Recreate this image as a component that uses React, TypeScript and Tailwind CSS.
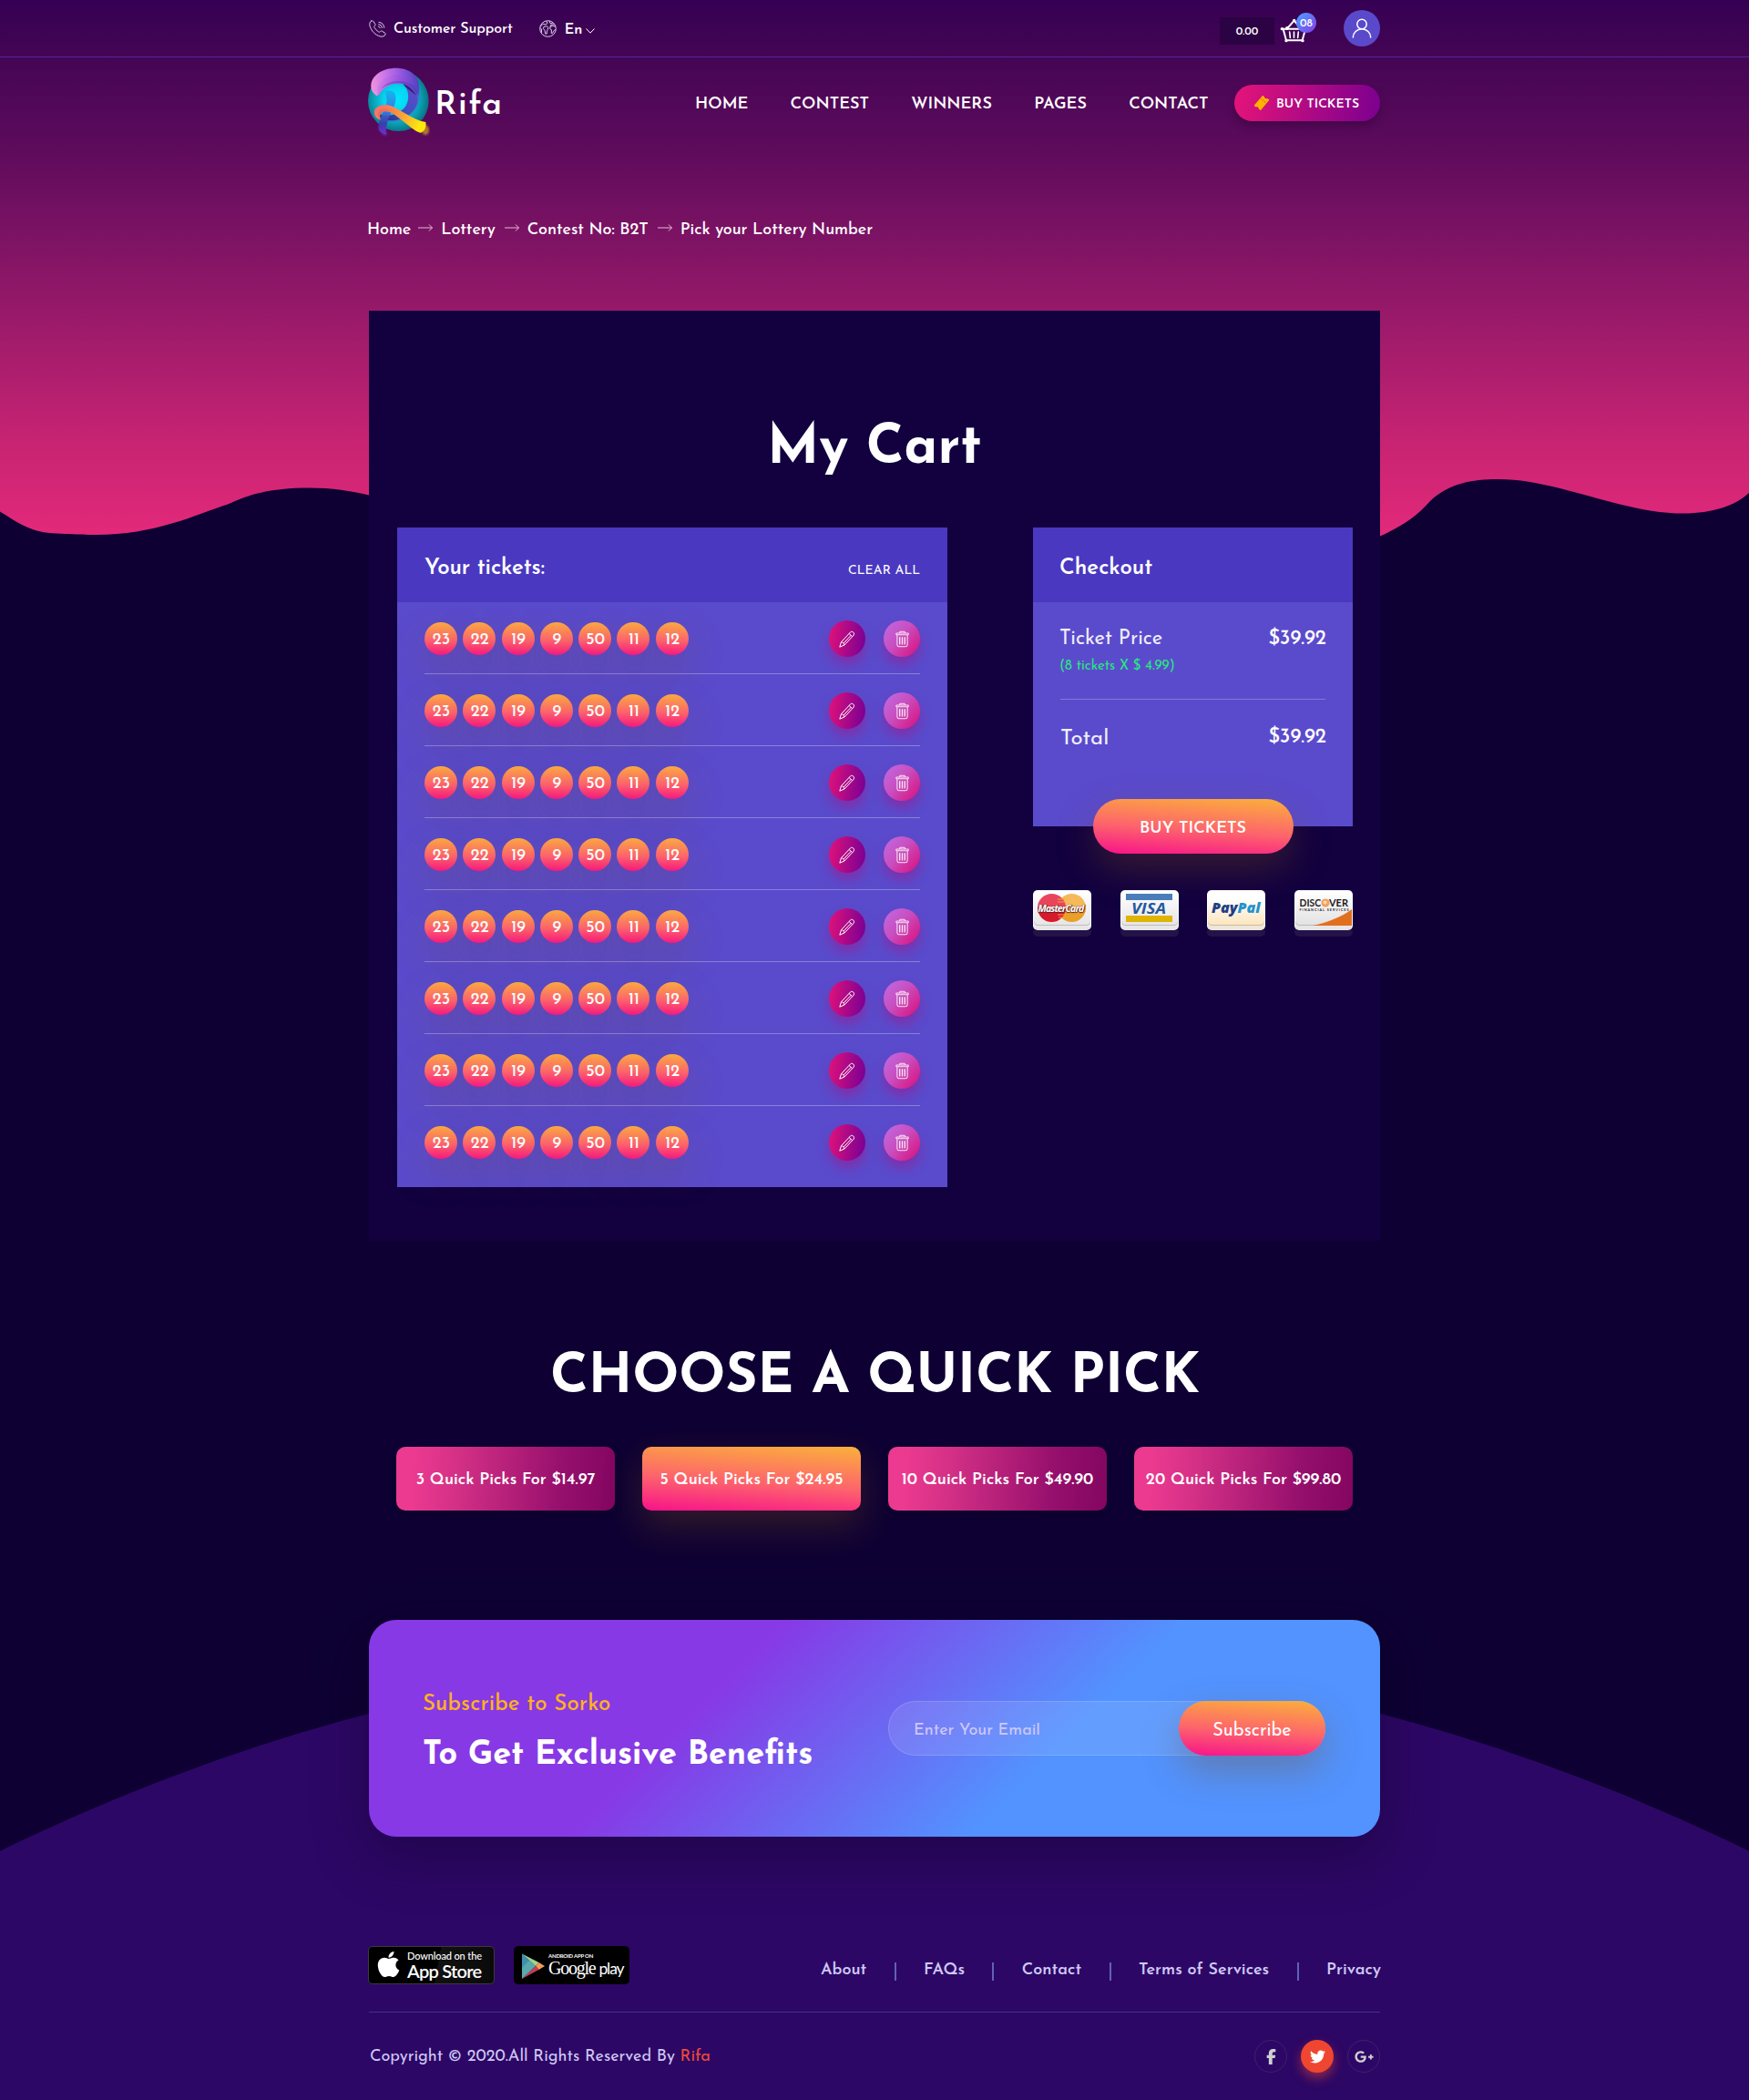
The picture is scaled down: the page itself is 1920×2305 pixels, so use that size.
import React from 'react';
import { FaApple, FaFacebookF, FaGooglePlusG, FaTwitter } from 'react-icons/fa6';

const numbers = [23, 22, 19, 9, 50, 11, 12];

function PhoneIcon() {
  return (
    <svg width="19" height="19" viewBox="0 0 19 19" fill="none" stroke="#d9cfe6" strokeWidth="1" strokeLinecap="round" strokeLinejoin="round">
      <path d="M2.6 1 C1 2 .3 4 1 6.500 C2.500 11.800 7 16.600 12.500 18 C15 18.600 17 17.800 18 16 C18.400 15 18 14.400 17.300 14 L14.500 12.200 C13.700 11.700 13 12 12.500 12.600 C11.800 13.500 11 13.300 10.200 12.700 C8.500 11.500 7 10 6 8.300 C5.500 7.400 5.600 6.700 6.500 6.200 C7.100 5.800 7.200 5.100 6.800 4.400 L5 1.600 C4.400 .7 3.500 .5 2.600 1 Z" />
      <path d="M10.500 7 C11.500 7.200 12 7.800 12.100 8.700 M10.700 4.800 C12.800 5 14.200 6.400 14.400 8.500 M11 2.400 C14.300 2.700 16.600 5 16.800 8.300" />
    </svg>
  );
}

function GlobeIcon() {
  return (
    <svg width="19" height="19" viewBox="0 0 19 19" fill="none" stroke="#d9cfe6" strokeWidth="1" strokeLinejoin="round">
      <circle cx="9.500" cy="9.500" r="8.800" />
      <path d="M1.200 7.200 L4.200 4.200 L7 5 L9.200 3.300 L7.500 1 M2.600 13.800 L2.400 10 L1 8.600" />
      <path d="M5.200 7.200 L8.400 6.800 L10 8.200 L9.200 10.600 L8.400 12.200 L8.200 15 L6.800 15.200 L5.900 11.200 L4.300 9.600 Z" />
      <path d="M11 1 L12 3.600 L14.600 3.600 M17.900 7 L14.600 6.300 L12 7.400 L11.800 9.900 L13.500 10.800 L13.200 14.400 L14.400 14.600 L16.200 11.500 L17.900 10.500 M12 7.400 L12.600 5.400 L16.500 4.600" />
    </svg>
  );
}

function BasketIcon() {
  return (
    <svg width="30" height="27.300" viewBox="224 60 90 82" fill="none" stroke="#fff" strokeWidth="6" strokeLinecap="round" strokeLinejoin="round">
      <path d="M231 95 H309 M235 96 L245 133 H298 L308 96" />
      <path d="M247 95 L271 68 L294 95" />
      <path d="M256 105 L258 124 M270.500 105 V124 M285 105 L283 124" strokeWidth="5" />
      <g fill="#fff" stroke="none">
        <circle cx="231" cy="95" r="5" />
        <circle cx="248" cy="93" r="6" />
        <circle cx="271" cy="67" r="5" />
        <circle cx="245" cy="134" r="5" />
        <circle cx="299" cy="134" r="5" />
      </g>
    </svg>
  );
}

function UserIcon() {
  return (
    <svg width="22" height="22" viewBox="0 0 22 22" fill="none" stroke="#fff" strokeWidth="1.500" strokeLinecap="round">
      <circle cx="11" cy="6.500" r="5.200" />
      <path d="M1.300 21 A9.700 9.300 0 0 1 20.700 21" />
    </svg>
  );
}

function TicketIcon() {
  return (
    <svg width="18" height="18" viewBox="0 0 18 18">
      <path d="M.6 11.800 L10.200 .8 L12 2.400 A2.300 2.300 0 0 0 15.400 4 L17.400 5.800 L7.800 17.200 L5.800 15.400 A2.200 2.200 0 0 0 2.600 13.400 Z" fill="#ffb100" />
      <path d="M8.400 4.200 L13.800 9" stroke="#c4187a" strokeWidth=".9" strokeDasharray="1.200 1.300" />
    </svg>
  );
}

function Logo() {
  return (
    <svg width="69" height="77" viewBox="17 192 207 231" className="mb-[2px] shrink-0">
      <defs>
        <radialGradient id="lgTeal" cx="0.47" cy="0.48" r="0.53">
          <stop offset="0" stopColor="#00e8ff" />
          <stop offset="0.4" stopColor="#06d3ee" />
          <stop offset="0.75" stopColor="#0a9fb2" />
          <stop offset="1" stopColor="#0b7386" />
        </radialGradient>
        <linearGradient id="lgCrest" x1="0" y1="0.6" x2="1" y2="0.5">
          <stop offset="0" stopColor="#f094dd" />
          <stop offset="0.35" stopColor="#c873ea" />
          <stop offset="0.7" stopColor="#8c55dc" />
          <stop offset="1" stopColor="#4e3fbe" />
        </linearGradient>
        <linearGradient id="lgInner" x1="0" y1="0.5" x2="1" y2="0.6">
          <stop offset="0" stopColor="#d77de8" />
          <stop offset="0.5" stopColor="#9a55e0" />
          <stop offset="1" stopColor="#5741c2" />
        </linearGradient>
        <linearGradient id="lgBowl" x1="1" y1="0" x2="0" y2="1">
          <stop offset="0" stopColor="#6a48c8" />
          <stop offset="0.5" stopColor="#3f50c4" />
          <stop offset="1" stopColor="#2a2a7c" />
        </linearGradient>
        <linearGradient id="lgStem" x1="0" y1="0" x2="0" y2="1">
          <stop offset="0" stopColor="#12b4f0" />
          <stop offset="0.5" stopColor="#3d6fdc" />
          <stop offset="0.75" stopColor="#3b3aa8" />
          <stop offset="1" stopColor="#6a35e0" />
        </linearGradient>
        <linearGradient id="lgLeg" x1="0" y1="0" x2="1" y2="0.25">
          <stop offset="0" stopColor="#ee4a6e" />
          <stop offset="0.3" stopColor="#f67a50" />
          <stop offset="0.6" stopColor="#f6a23c" />
          <stop offset="1" stopColor="#fde80c" />
        </linearGradient>
        <filter id="lgBlur"><feGaussianBlur stdDeviation="3" /></filter>
      </defs>
      <circle cx="117" cy="302" r="100" fill="url(#lgTeal)" />
      <path d="M184 262 C196 305 178 352 120 368 C90 376 60 372 46 352 C85 365 130 352 147 320 C160 292 155 262 135 246 Z" fill="#3f6fd0" opacity="0.55" />
      <path d="M132 244 C160 250 186 270 180 305 C172 345 125 372 78 366 C60 363 50 355 49 342 C70 358 112 350 136 326 C156 304 154 268 132 244 Z" fill="url(#lgBowl)" />
      <path d="M47 286 C20 272 20 234 48 213 C80 189 138 188 166 213 C184 229 190 256 182 286 C166 256 140 242 110 245 C80 248 62 262 47 286 Z" fill="url(#lgCrest)" />
      <path d="M52 284 C42 262 50 238 76 224 C104 209 146 216 168 238 C178 250 182 268 180 282 C164 254 140 241 110 244 C84 247 66 262 52 284 Z" fill="url(#lgInner)" />
      <path d="M60 262 C78 236 130 226 166 252 C174 258 178 268 180 280 C164 254 140 241 110 244 C90 246 72 254 60 262 Z" fill="#4f35b8" opacity="0.4" />
      <path d="M132 247 C150 252 166 266 176 284 C158 270 144 262 132 247 Z" fill="#241a66" opacity="0.8" />
      <path d="M74 270 C96 262 112 274 108 302 C102 332 84 350 80 376 C77 394 74 404 78 412 C62 412 50 402 51 386 C55 352 76 334 79 302 Z" fill="url(#lgStem)" opacity="0.92" />
      <ellipse cx="72" cy="410" rx="9" ry="7" fill="#6a35c0" opacity="0.5" filter="url(#lgBlur)" />
      <ellipse cx="206" cy="398" rx="12" ry="16" fill="#f0c010" opacity="0.6" filter="url(#lgBlur)" />
      <path d="M38 345 C34 325 54 313 82 316 C118 324 162 366 207 372 C210 388 204 402 190 407 C164 402 122 354 88 339 C66 331 52 342 58 364 C46 362 40 354 38 345 Z" fill="url(#lgLeg)" />
      <path d="M38 345 C34 325 54 313 82 316 C95 319 108 325 122 334 C100 326 62 320 52 340 C48 350 52 358 58 364 C46 362 40 354 38 345 Z" fill="#fb8a6a" opacity="0.55" />
    </svg>
  );
}

function Arrow() {
  return (
    <svg width="16" height="8" viewBox="0 0 16 8" fill="none" stroke="#e2bcd8" strokeWidth="1" className="mb-[6px]">
      <path d="M0 4 H15.500 M12 .5 L15.500 4 L12 7.500" />
    </svg>
  );
}

function PencilIcon() {
  return (
    <svg width="18" height="19" viewBox="0 0 18 19" fill="none" stroke="#fff" strokeWidth="1" strokeLinejoin="round">
      <path d="M.8 18.200 L2.400 12.800 L12.600 1.800 C14.600 .2 17.500 2.700 16.300 5 L6 16 Z" />
      <path d="M2.400 12.800 C4 12.800 5.800 14.300 6 16 M11.100 3.500 L14.700 6.700 M5.200 14 L13.300 5.200" />
    </svg>
  );
}

function TrashIcon() {
  return (
    <svg width="15" height="19" viewBox="0 0 16 19" fill="none" stroke="#f7e6f4" strokeWidth="1.100" strokeLinejoin="round">
      <path d="M5 2.600 V1.500 C5 1 5.300 .6 5.800 .6 H10.200 C10.700 .6 11 1 11 1.500 V2.600" />
      <rect x=".8" y="2.600" width="14.400" height="1.900" rx=".8" />
      <path d="M2 4.800 V16.200 C2 17.400 2.800 18.300 4 18.300 H12 C13.200 18.300 14 17.400 14 16.200 V4.800" />
      <path d="M5 7 V16 M8 7 V16 M11 7 V16" strokeWidth="1.500" />
    </svg>
  );
}

function TicketRow() {
  return (
    <div className="flex h-[79px] items-start justify-between border-b border-[#8b80da] pt-5 last:h-[89px] last:border-b-0">
      <div className="mt-[2px] flex gap-[6.300px]">
        {numbers.map((n) => (
          <span key={n} className="flex size-9 items-center justify-center rounded-full bg-[linear-gradient(2deg,#f7167f_0%,#fd646c_45%,#fbac40_100%)] pt-[3px] pl-px text-[18px] leading-none font-medium shadow-[0_17px_40px_rgba(124,78,25,0.25)]">
            {n}
          </span>
        ))}
      </div>
      <div className="flex gap-5">
        <button className="flex size-10 items-center justify-center rounded-full bg-[linear-gradient(97deg,#e2127a_0%,#750094_100%)] shadow-[0_8px_12px_rgba(165,20,140,0.5)]">
          <PencilIcon />
        </button>
        <button className="flex size-10 items-center justify-center rounded-full bg-[linear-gradient(130deg,#c165dd_10%,#c84fc0_45%,#dc0b78_100%)] shadow-[0_8px_12px_rgba(165,20,140,0.5)]">
          <TrashIcon />
        </button>
      </div>
    </div>
  );
}

function PayCard({ children, tone }: { children: React.ReactNode; tone: string }) {
  return (
    <div className="w-16">
      <div className={`relative h-11 rounded-[5px] border border-b-0 border-white/70 shadow-[inset_0_-5px_0_rgba(255,255,255,0.65),inset_0_-6px_0_rgba(120,110,110,0.35)] ${tone}`}>
        {children}
      </div>
      <div className="h-[7px] rounded-b-[5px] bg-[#231349]" />
    </div>
  );
}

function PaymentCards() {
  return (
    <div className="mt-[70px] flex w-[351px] justify-between">
      <PayCard tone="bg-[linear-gradient(#ffffff,#e2e2e4)]">
        <svg width="64" height="44" viewBox="0 0 64 44" className="absolute -top-px -left-px">
          <defs>
            <linearGradient id="mcRed" x1="0" y1="0" x2="0" y2="1"><stop offset="0.45" stopColor="#e9455a" /><stop offset="0.5" stopColor="#d8192c" /></linearGradient>
            <linearGradient id="mcGold" x1="0" y1="0" x2="0" y2="1"><stop offset="0.45" stopColor="#f6b95a" /><stop offset="0.5" stopColor="#ea9f28" /></linearGradient>
          </defs>
          <circle cx="42.500" cy="19.500" r="15.500" fill="url(#mcGold)" />
          <circle cx="20.500" cy="19.500" r="15.500" fill="url(#mcRed)" />
          <path d="M27 10 H35 M27 13 H36 M27 27 H36 M28 30 H35" stroke="#f0a040" strokeWidth="1" />
        </svg>
        <span className="absolute top-[12px] left-[4.500px] font-['Open_Sans'] text-[10.500px] leading-[14px] font-bold tracking-[-0.850px] text-white italic [text-shadow:0_0_1px_#5a2020,0_1px_1px_#5a2020,1px_0_1px_#5a2020]">MasterCard</span>
      </PayCard>
      <PayCard tone="bg-[linear-gradient(#ffffff,#e2e2e4)]">
        <svg width="64" height="44" viewBox="0 0 64 44" className="absolute -top-px -left-px">
          <rect x="6" y="4" width="51" height="7" fill="#4a7dba" />
          <rect x="6" y="28" width="51" height="7" fill="#dfb404" />
          <text x="12" y="25.800" fontFamily="Open Sans, sans-serif" fontSize="16" fontWeight="700" fontStyle="italic" fill="#2458a0" textLength="38" lengthAdjust="spacingAndGlyphs">VISA</text>
        </svg>
      </PayCard>
      <PayCard tone="bg-[linear-gradient(#ffffff_20%,#fbe0b0)]">
        <svg width="64" height="44" viewBox="0 0 64 44" className="absolute -top-px -left-px">
          <text x="5" y="25" fontFamily="Open Sans, sans-serif" fontSize="15" fontWeight="800" fontStyle="italic" fill="#1f3f87" textLength="28.500" lengthAdjust="spacingAndGlyphs">Pay</text>
          <text x="33.500" y="25" fontFamily="Open Sans, sans-serif" fontSize="15" fontWeight="800" fontStyle="italic" fill="#2292cf" textLength="25" lengthAdjust="spacingAndGlyphs">Pal</text>
        </svg>
      </PayCard>
      <PayCard tone="bg-[linear-gradient(#ffffff,#dededf)]">
        <svg width="64" height="44" viewBox="0 0 64 44" className="absolute -top-px -left-px">
          <path d="M20 39 C38 35 52 29 63 21 V39 Z" fill="#e0701f" />
          <circle cx="34" cy="14" r="4.600" fill="#f3a05c" />
          <circle cx="33.600" cy="13.500" r="2" fill="#fcd9b8" />
          <text x="5.500" y="18" fontFamily="Lato, sans-serif" fontSize="11.500" fontWeight="700" fill="#1c1a1a" textLength="23.500" lengthAdjust="spacingAndGlyphs">DISC</text>
          <text x="38" y="18" fontFamily="Lato, sans-serif" fontSize="11.500" fontWeight="700" fill="#1c1a1a" textLength="21" lengthAdjust="spacingAndGlyphs">VER</text>
          <text x="5.500" y="22.800" fontFamily="Lato, sans-serif" fontSize="3.800" fontWeight="700" fill="#2b2929" textLength="54">FINANCIAL SERVICES</text>
        </svg>
      </PayCard>
    </div>
  );
}

const orange =
  'bg-[linear-gradient(4deg,#f7128a_0%,#fd646c_45%,#fbb03b_100%)] shadow-[0_17px_40px_rgba(124,78,25,0.35)]';
const pink =
  'bg-[linear-gradient(94deg,#ec3a90_8%,#d43086_28%,#950f6c_76%,#830661_100%)] shadow-[0_4px_10px_rgba(0,0,0,0.15)]';

const picks = [
  { label: '3 Quick Picks For $14.97', tone: pink },
  { label: '5 Quick Picks For $24.95', tone: orange },
  { label: '10 Quick Picks For $49.90', tone: pink },
  { label: '20 Quick Picks For $99.80', tone: pink },
];

const links = ['About', 'FAQs', 'Contact', 'Terms of Services', 'Privacy'];

function Backdrop() {
  return (
    <>
      <svg width="1920" height="600" viewBox="0 0 1920 600" className="absolute top-0 left-0">
        <defs>
          <linearGradient id="sky" x1="0" y1="0" x2="0" y2="590" gradientUnits="userSpaceOnUse">
            <stop offset="0" stopColor="#350054" />
            <stop offset="0.105" stopColor="#440554" />
            <stop offset="0.26" stopColor="#5b0a5b" />
            <stop offset="0.47" stopColor="#821465" />
            <stop offset="0.81" stopColor="#c52372" />
            <stop offset="1" stopColor="#e4297a" />
          </linearGradient>
        </defs>
        <path d="M0 561.500 C20 574 35 585 62 585.500 C90 587 100 587 105 587 C170 587 215 565 250 553.500 C270 545 290 535.500 340 535.500 C365 535.500 385 539 405 543.500 L1515 588.500 C1540 577 1555 567 1570 550 C1590 531 1615 526 1645 526 C1710 526 1780 563.500 1848 563.500 C1880 563.500 1905 555 1920 541 V0 H0 Z" fill="url(#sky)" />
      </svg>
      <svg width="1920" height="505" viewBox="0 1800 1920 505" className="absolute bottom-0 left-0">
        <circle cx="960" cy="3989" r="2180" fill="#2d0765" />
      </svg>
    </>
  );
}

export default function App() {
  return (
    <div className="relative h-[2305px] w-full overflow-hidden bg-[#0e0033] font-['Josefin_Sans',Lato,sans-serif] leading-none text-white">
      <Backdrop />
      <div className="relative">
        <div className="h-[63px] border-b border-[#4a2b9e]">
          <div className="mx-auto flex h-[62px] w-[1110px] items-center justify-between">
            <div className="flex items-center text-base leading-none font-medium">
              <PhoneIcon />
              <span className="ml-[8px] pt-[2px] tracking-[-0.100px]">Customer Support</span>
              <span className="ml-[29px]"><GlobeIcon /></span>
              <span className="ml-[9px] pt-[3px] font-semibold">En</span>
              <svg width="10" height="6" viewBox="0 0 10 6" fill="none" stroke="#fff" strokeWidth="1" className="mt-[6px] ml-[4px]">
                <path d="M.5 .5 L5 5.200 L9.500 .5" />
              </svg>
            </div>
            <div className="flex items-center">
              <span className="mt-[6px] flex h-[30px] w-[60px] items-center justify-center bg-[#2b0243] pt-[2px] text-xs leading-none font-semibold">0.00</span>
              <span className="relative mt-[5px] ml-[6px]">
                <BasketIcon />
                <span className="absolute -top-[6px] left-[18px] flex size-[22px] items-center justify-center rounded-full bg-[linear-gradient(135deg,#5293ff_15%,#8739e5_100%)] pt-[2px] text-xs leading-none font-medium">08</span>
              </span>
              <span className="ml-[40px] flex size-10 items-center justify-center rounded-full bg-[#5a49cb]">
                <UserIcon />
              </span>
            </div>
          </div>
        </div>

        <div className="mx-auto flex h-[100px] w-[1110px] items-center">
          <div className="-ml-[1px] flex items-center">
            <Logo />
            <span className="mt-[6px] ml-[4px] text-[36.500px] leading-none font-semibold tracking-[1.500px]">Rifa</span>
          </div>
          <nav className="mr-[28.500px] ml-auto flex gap-[46.250px] pt-[3px] text-lg leading-none font-semibold">
            <a>HOME</a><a>CONTEST</a><a>WINNERS</a><a>PAGES</a><a>CONTACT</a>
          </nav>
          <button className="flex h-10 w-40 items-center rounded-full bg-[linear-gradient(97deg,#e0137a_5%,#7b008f_100%)] pl-[21px] text-sm leading-none font-semibold shadow-[0_6px_8px_rgba(40,0,50,0.35)]">
            <TicketIcon />
            <span className="ml-[7px] pt-[3px]">BUY TICKETS</span>
          </button>
        </div>

        <div className="mx-auto mt-[81px] flex h-[18px] w-[1114px] items-center text-lg leading-none font-medium tracking-[-0.060px]">
          <span>Home</span>
          <span className="mr-[9px] ml-[8px]"><Arrow /></span>
          <span>Lottery</span>
          <span className="mr-[9px] ml-[10px]"><Arrow /></span>
          <span>Contest No: B2T</span>
          <span className="mr-[9px] ml-[10px]"><Arrow /></span>
          <span>Pick your Lottery Number</span>
        </div>

        <main className="mx-auto mt-[79px] h-[1021px] w-[1110px] bg-[#12003f] pt-[122px]">
          <h1 className="text-center text-[60px] leading-none font-bold">My Cart</h1>
          <div className="mt-[56px] flex items-start justify-between pr-[30px] pl-[31px]">
            <section className="w-[604px] bg-[#5a4bcc]">
              <div className="flex h-[82px] items-baseline justify-between bg-[#4a38c0] px-[30px] pt-[33px]">
                <h2 className="text-2xl leading-none font-semibold tracking-[-0.080px]">Your tickets:</h2>
                <button className="text-sm leading-none tracking-[0.080px]">CLEAR ALL</button>
              </div>
              <div className="px-[30px]">
                {[1, 2, 3, 4, 5, 6, 7, 8].map((row) => <TicketRow key={row} />)}
              </div>
            </section>

            <aside className="w-[351px]">
              <div className="relative h-[328px] bg-[#5a4bcc]">
                <div className="h-[82px] bg-[#4a38c0] px-[29px] pt-[33px]">
                  <h2 className="text-2xl leading-none font-semibold">Checkout</h2>
                </div>
                <div className="mx-[30px] border-b border-[#8276d9] pt-[30px] pb-[28px]">
                  <div className="-ml-px flex items-baseline justify-between text-[22px] leading-none">
                    <span className="text-[#f0eefb]">Ticket Price</span>
                    <span className="-mr-px text-[22px] leading-none font-medium">$39.92</span>
                  </div>
                  <p className="mt-[11px] -ml-px text-[15px] leading-none text-[#27e87f]">(8 tickets X $ 4.99)</p>
                </div>
                <div className="mx-[30px] mt-[31px] flex items-start justify-between">
                  <span className="text-[24px] leading-none text-[#f0eefb]">Total</span>
                  <span className="-mr-px text-[22px] leading-none font-medium">$39.92</span>
                </div>
                <button className={`absolute -bottom-[30px] left-[66px] flex h-[60px] w-[220px] items-center justify-center rounded-full pt-[5px] pr-px text-lg leading-none font-semibold ${orange}`}>
                  BUY TICKETS
                </button>
              </div>
              <PaymentCards />
            </aside>
          </div>
        </main>

        <section className="mx-auto mt-[121px] w-[1110px]">
          <h2 className="pl-px text-center text-[60px] leading-none font-bold">CHOOSE A QUICK PICK</h2>
          <div className="mx-[30px] mt-[45px] grid grid-cols-4 gap-[30px]">
            {picks.map((p) => (
              <button key={p.label} className={`flex h-[70px] items-center justify-center rounded-[10px] pt-[3px] text-lg leading-none font-semibold whitespace-nowrap ${p.tone}`}>
                {p.label}
              </button>
            ))}
          </div>
        </section>

        <section className="mx-auto mt-[120px] flex h-[238px] w-[1110px] justify-between rounded-[30px] bg-[linear-gradient(135deg,#8739e5_34%,#5293ff_66.500%)] px-[60px] shadow-[0_20px_60px_rgba(10,0,30,0.35)]">
          <div className="-ml-px pt-[81px]">
            <p className="text-2xl leading-none font-medium tracking-[0.150px] text-[#ffb21c]">Subscribe to Sorko</p>
            <h2 className="mt-[26px] text-4xl leading-none font-bold">To Get Exclusive Benefits</h2>
          </div>
          <div className="mt-[89px] flex h-[60px] w-[480px] rounded-full bg-white/10 ring-1 ring-white/15 ring-inset">
            <input type="email" placeholder="Enter Your Email" className="w-[319px] bg-transparent pt-[5px] pl-[28px] text-lg outline-none placeholder:text-[#cfc8fb]" />
            <button className={`h-[60px] w-[161px] rounded-full pt-[6px] text-xl leading-none ${orange}`}>Subscribe</button>
          </div>
        </section>

        <footer className="mx-auto mt-[120px] w-[1110px]">
          <div className="flex h-[73px] items-start justify-between border-b border-[#3f318c]">
            <div className="-ml-px flex gap-[21px]">
              <div className="flex h-[42px] w-[139px] items-center rounded-[5px] border border-[#3a3a3a] bg-[linear-gradient(100deg,#000_55%,#111_55%,#0a0a0a)]">
                <FaApple className="mb-[2px] ml-[8px] h-[32px] w-[27px]" />
                <div className="ml-[7px] font-['Lato']">
                  <div className="text-[11px] leading-[12px] font-medium tracking-[-0.130px] whitespace-nowrap">Download on the</div>
                  <div className="text-[20px] leading-[20px] font-semibold tracking-[-0.750px] whitespace-nowrap">App Store</div>
                </div>
              </div>
              <div className="flex h-[42px] w-[127px] items-center rounded-[5px] bg-black">
                <svg width="25" height="29" viewBox="0 0 25 29" className="mt-[2px] ml-[9px] shrink-0">
                  <path d="M0 .5 L15 14 L0 28 Z" fill="#3f8fb0" />
                  <path d="M0 28 L15 14 L8 8 L0 16 Z" fill="#63b3ae" opacity="0.7" />
                  <path d="M0 .5 L18.500 10 L15 14 Z" fill="#9fd28c" />
                  <path d="M18.500 10 L25 14 L18.500 18 L15 14 Z" fill="#f59a55" />
                  <path d="M0 28 L18.500 18 L15 14 Z" fill="#c43c56" />
                </svg>
                <div className="ml-[4px]">
                  <div className="font-['Lato'] text-[6px] leading-[7px] font-bold tracking-[-0.200px] whitespace-nowrap">ANDROID APP ON</div>
                  <div className="flex items-baseline leading-[20px]">
                    <span className="font-['Liberation_Serif',serif] text-[20px] tracking-[-1.250px]">Google</span>
                    <span className="ml-[4px] font-['Lato'] text-[17.500px] tracking-[-1.100px]">play</span>
                  </div>
                </div>
              </div>
            </div>
            <div className="mt-[18px] -mr-px flex gap-[30.400px] text-lg leading-none font-semibold text-[#cfc9f5]">
              {links.map((l, i) => (
                <React.Fragment key={l}>
                  {i > 0 && <span className="h-[20px] w-[2px] bg-[#5d62ba]" />}
                  <a>{l}</a>
                </React.Fragment>
              ))}
            </div>
          </div>
          <div className="mt-[30px] flex h-9 items-center justify-between">
            <p className="pt-px pl-px text-lg leading-none text-[#cfc9f5]">Copyright © 2020.All Rights Reserved By <span className="text-[#f04a35]">Rifa</span></p>
            <div className="flex gap-[15px] text-[#cfcfcf]">
              <a className="flex size-9 items-center justify-center rounded-full border border-[#412069]"><FaFacebookF className="size-[17px]" /></a>
              <a className="flex size-9 items-center justify-center rounded-full bg-[#ef4631] text-white shadow-[0_6px_12px_rgba(239,70,49,0.5)]"><FaTwitter className="size-[17px]" /></a>
              <a className="flex size-9 items-center justify-center rounded-full border border-[#412069]"><FaGooglePlusG className="size-[21px]" /></a>
            </div>
          </div>
        </footer>
      </div>
    </div>
  );
}
